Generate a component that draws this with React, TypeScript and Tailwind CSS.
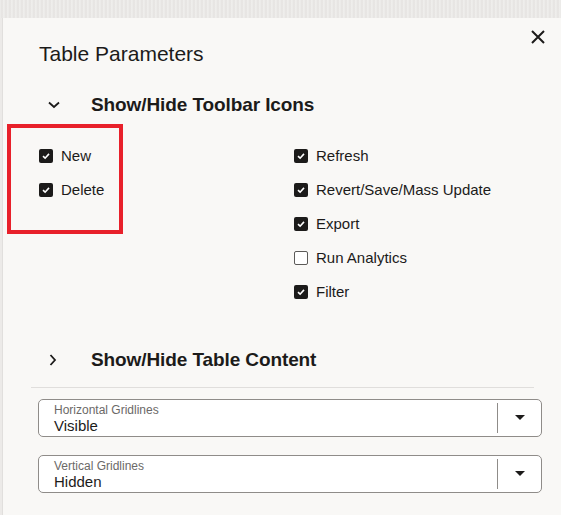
import React, { useState } from 'react';

const font = { fontFamily: '"Liberation Sans", Arial, sans-serif' };

function Check({ checked, label, onToggle }: { checked: boolean; label: string; onToggle: () => void }) {
  return (
    <button onClick={onToggle} className="flex h-[34px] items-center gap-[8px] text-left">
      {checked ? (
        <span className="flex h-[14px] w-[14px] items-center justify-center rounded-[2px] bg-[#1c1b1a]">
          <svg width="10" height="10" viewBox="0 0 10 10">
            <path d="M2 5.2 L4.1 7.2 L8 2.9" fill="none" stroke="#fff" strokeWidth="1.6" />
          </svg>
        </span>
      ) : (
        <span className="h-[14px] w-[14px] rounded-[2px] border border-[#5c5a58] bg-white" />
      )}
      <span className="text-[15px] text-[#1c1b1a]">{label}</span>
    </button>
  );
}

function Select({ label, value }: { label: string; value: string }) {
  return (
    <div className="flex h-[38px] items-center rounded-[5px] border border-[#8f8c89] bg-white">
      <div className="flex flex-1 flex-col pl-[15px] leading-none">
        <span className="text-[12px] text-[#6b6967]">{label}</span>
        <span className="mt-[2px] text-[15px] text-[#1c1b1a]">{value}</span>
      </div>
      <div className="h-[30px] w-px bg-[#8f8c89]" />
      <div className="flex w-[43px] justify-center">
        <svg width="10" height="6" viewBox="0 0 10 6">
          <path d="M0 0 H10 L5 5 Z" fill="#1c1b1a" />
        </svg>
      </div>
    </div>
  );
}

export default function App() {
  const [items, setItems] = useState<Record<string, boolean>>({
    New: true,
    Delete: true,
    Refresh: true,
    'Revert/Save/Mass Update': true,
    Export: true,
    'Run Analytics': false,
    Filter: true,
  });
  const toggle = (k: string) => setItems({ ...items, [k]: !items[k] });
  const left = ['New', 'Delete'];
  const right = ['Refresh', 'Revert/Save/Mass Update', 'Export', 'Run Analytics', 'Filter'];

  return (
    <div style={font} className="h-[515px] w-[561px] overflow-hidden bg-[#eceae8]">
      <div className="h-[18px] bg-[repeating-linear-gradient(90deg,#efeeec_0px,#e4e2e0_2px,#f2f1ef_4px)]" />
      <div className="relative ml-[2px] h-[497px] border-l border-[#e1dfdd] bg-[#f9f8f6]">
        <button className="absolute right-[16px] top-[12px] text-[#1c1b1a]">
          <svg width="14" height="14" viewBox="0 0 14 14">
            <path d="M1 1 L13 13 M13 1 L1 13" stroke="#1c1b1a" strokeWidth="2" />
          </svg>
        </button>

        <h1 className="pl-[36px] pt-[22px] text-[21px] leading-[28px] text-[#1c1b1a]">Table Parameters</h1>

        <div className="mt-[23px] flex h-[28px] items-center">
          <div className="flex w-[88px] justify-center pl-[14px]">
            <svg width="12" height="8" viewBox="0 0 12 8">
              <path d="M1 1.5 L6 6 L11 1.5" fill="none" stroke="#1c1b1a" strokeWidth="1.8" />
            </svg>
          </div>
          <span className="text-[19px] font-bold tracking-[-0.1px] text-[#1c1b1a]">Show/Hide Toolbar Icons</span>
        </div>

        <div className="mt-[20px] grid grid-cols-[255px_1fr] pl-[36px]">
          <div className="flex flex-col">
            {left.map((k) => (
              <Check key={k} label={k} checked={items[k]} onToggle={() => toggle(k)} />
            ))}
          </div>
          <div className="flex flex-col">
            {right.map((k) => (
              <Check key={k} label={k} checked={items[k]} onToggle={() => toggle(k)} />
            ))}
          </div>
        </div>

        <div className="mt-[37px] flex h-[28px] items-center">
          <div className="flex w-[88px] justify-center pl-[12px]">
            <svg width="8" height="12" viewBox="0 0 8 12">
              <path d="M1.5 1 L6 6 L1.5 11" fill="none" stroke="#1c1b1a" strokeWidth="1.8" />
            </svg>
          </div>
          <span className="text-[19px] font-bold tracking-[-0.1px] text-[#1c1b1a]">Show/Hide Table Content</span>
        </div>

        <div className="ml-[28px] mr-[27px] mt-[13px] h-px bg-[#e0dedc]" />

        <div className="ml-[35px] mr-[19px] mt-[11px] flex flex-col gap-[18px]">
          <Select label="Horizontal Gridlines" value="Visible" />
          <Select label="Vertical Gridlines" value="Hidden" />
        </div>

        <div className="pointer-events-none absolute left-[4px] top-[106px] h-[110px] w-[116px] border-[4px] border-[#e8202a]" />
      </div>
    </div>
  );
}
